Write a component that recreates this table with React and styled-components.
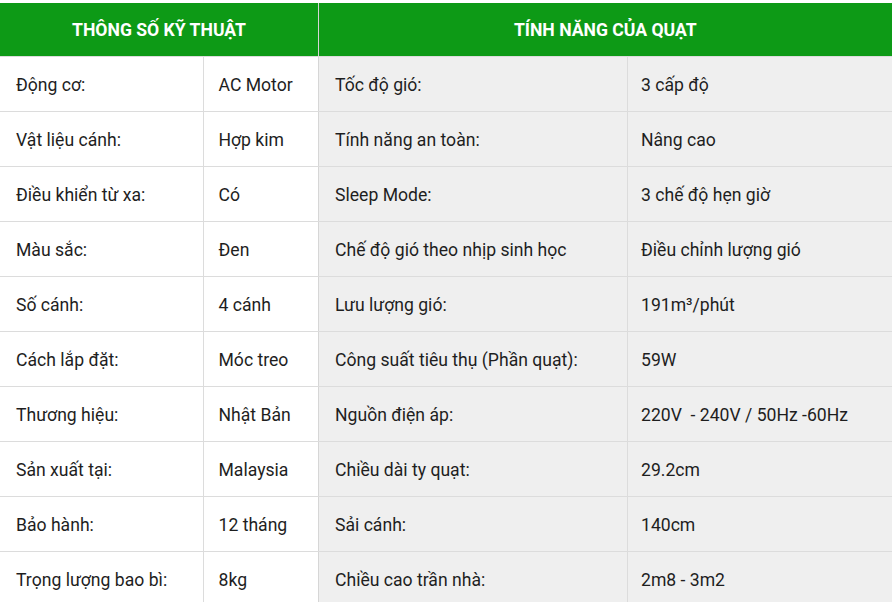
import React from 'react'
import styled, { createGlobalStyle } from 'styled-components'

const GlobalStyle = createGlobalStyle`
    body {
        margin: 0;
        background: #fff;
        font-family: Roboto, "Liberation Sans", Arial, sans-serif;
    }
`

const specs = [
    ['Động cơ:', 'AC Motor'],
    ['Vật liệu cánh:', 'Hợp kim'],
    ['Điều khiển từ xa:', 'Có'],
    ['Màu sắc:', 'Đen'],
    ['Số cánh:', '4 cánh'],
    ['Cách lắp đặt:', 'Móc treo'],
    ['Thương hiệu:', 'Nhật Bản'],
    ['Sản xuất tại:', 'Malaysia'],
    ['Bảo hành:', '12 tháng'],
    ['Trọng lượng bao bì:', '8kg'],
]

const features = [
    ['Tốc độ gió:', '3 cấp độ'],
    ['Tính năng an toàn:', 'Nâng cao'],
    ['Sleep Mode:', '3 chế độ hẹn giờ'],
    ['Chế độ gió theo nhịp sinh học', 'Điều chỉnh lượng gió'],
    ['Lưu lượng gió:', '191m³/phút'],
    ['Công suất tiêu thụ (Phần quạt):', '59W'],
    ['Nguồn điện áp:', '220V  - 240V / 50Hz -60Hz'],
    ['Chiều dài ty quạt:', '29.2cm'],
    ['Sải cánh:', '140cm'],
    ['Chiều cao trần nhà:', '2m8 - 3m2'],
]

const SpecTable = ({ title, rows, widths, shaded }) => (
    <Table $width={widths[0] + widths[1]} $shaded={shaded}>
        <colgroup>
            <col style={{ width: widths[0] }} />
            <col style={{ width: widths[1] }} />
        </colgroup>
        <thead>
            <tr>
                <HeadCell colSpan={2}>{title}</HeadCell>
            </tr>
        </thead>
        <tbody>
            {rows.map(([label, value]) => (
                <tr key={label}>
                    <Cell>{label}</Cell>
                    <Cell>{value}</Cell>
                </tr>
            ))}
        </tbody>
    </Table>
)

const App = () => {
    return (
        <Page>
            <GlobalStyle />
            <Tables>
                <SpecTable title='Thông số kỹ thuật' rows={specs} widths={[203, 115]} />
                <SpecTable title='Tính năng của quạt' rows={features} widths={[309, 264]} shaded />
            </Tables>
        </Page>
    )
}

const Page = styled.div`
    padding-top: 3px;
    height: 599px;
    overflow: hidden;
`

const Tables = styled.div`
    display: flex;
    width: 891px;
`

const Table = styled.table`
    width: ${p => p.$width}px;
    table-layout: fixed;
    border-collapse: collapse;
    background: ${p => (p.$shaded ? '#efefef' : '#fff')};
    border-left: ${p => (p.$shaded ? '1px solid #d6d6d6' : 'none')};
    color: #1e1e1e;
    font-size: 17.6px;
    td + td {
        padding-left: ${p => (p.$shaded ? '13px' : '15px')};
    }
`

const HeadCell = styled.th`
    height: 53px;
    padding: 0;
    background: #0d9a16;
    color: #fff;
    font-weight: 700;
    font-size: 17.6px;
    text-transform: uppercase;
    text-align: center;
`

const Cell = styled.td`
    height: 52px;
    padding: 2px 14px 0 16px;
    border-top: 1px solid #dcdcdc;
    white-space: pre;
    & + & {
        border-left: 1px solid #dcdcdc;
    }
`

export default App
